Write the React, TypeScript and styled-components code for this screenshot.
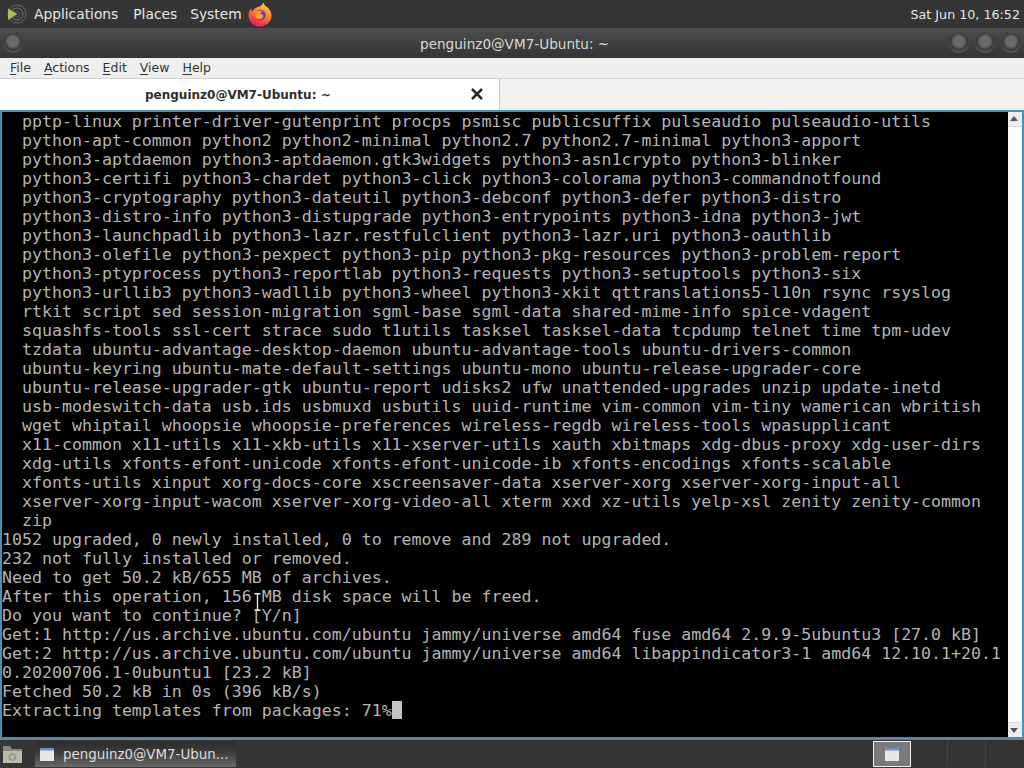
import React from "react";
import styled, { createGlobalStyle } from "styled-components";

const Global = createGlobalStyle`
  html, body { margin: 0; padding: 0; width: 1024px; height: 768px; overflow: hidden; background: #333; }
  * { box-sizing: border-box; }
`;

const Screen = styled.div`
  width: 1024px;
  height: 768px;
  display: flex;
  flex-direction: column;
  font-family: "DejaVu Sans", sans-serif;
  position: relative;
  overflow: hidden;
`;

const TopPanel = styled.div`
  height: 28px;
  background: #353535;
  display: flex;
  align-items: center;
  padding: 0 4px 0 6px;
  color: #e6e6e6;
  font-size: 13.8px;
  flex: none;
`;

const PanelMenu = styled.span<{ $left: number }>`
  margin-left: ${(p) => p.$left}px;
  display: flex;
`;

const Clock = styled.span`
  margin-left: auto;
  font-size: 12.7px;
`;

const TitleBar = styled.div`
  height: 30px;
  flex: none;
  background: linear-gradient(#4e4e4e, #414141 45%, #343434);
  display: flex;
  align-items: center;
  justify-content: space-between;
  padding: 0 3px 0 3px;
  position: relative;
`;

const Title = styled.div`
  position: absolute;
  left: 420px;
  top: 8px;
  color: #d8d8d8;
  font-size: 13.6px;
  white-space: nowrap;
`;

const Orb = styled.span`
  display: block;
  width: 20px;
  height: 20px;
  border-radius: 50%;
  background: radial-gradient(circle at 50% 42%, #6a6a6a 0 32%, #333333 58% 76%, #4c4c4c 100%);
  box-shadow: inset 0 -2px 2px #5a5a5a;
`;

const Orbs = styled.div`
  display: flex;
  gap: 6px;
`;

const MenuBar = styled.div`
  height: 20px;
  flex: none;
  background: #eeeeee;
  display: flex;
  align-items: center;
  padding: 0 0 2px 10px;
  gap: 13px;
  font-size: 12.5px;
  color: #333;
`;

const Key = styled.span`
  text-decoration: underline;
  text-underline-offset: 2px;
`;

const TabBar = styled.div`
  height: 32px;
  flex: none;
  display: flex;
  background: #f2f1f0;
  border-top: 1px solid #d4d4d4;
`;

const Tab = styled.div`
  width: 500px;
  background: #ffffff;
  border-right: 1px solid #c8c8c8;
  position: relative;
  display: flex;
  align-items: center;
  font-size: 12px;
  font-weight: bold;
  color: #2e2e2e;
  padding-left: 145px;
  height: 31px;
`;

const TabClose = styled.svg`
  position: absolute;
  left: 470px;
  top: 8px;
`;

const TermFrame = styled.div`
  flex: 1;
  min-height: 0;
  border: 2px solid #4a8fb5;
  border-bottom: 3px solid #5a84a8;
  display: flex;
  background: #000;
`;

const Term = styled.pre`
  flex: 1;
  margin: 0;
  padding: 0;
  background: #000;
  color: #b4b4b4;
  font-family: "DejaVu Sans Mono", monospace;
  font-size: 16.6px;
  line-height: 19px;
  overflow: hidden;
  white-space: pre;
`;

const Block = styled.span`
  display: inline-block;
  width: 10px;
  height: 18px;
  background: #c4c4c4;
  vertical-align: top;
`;

const ScrollBar = styled.div`
  width: 14px;
  flex: none;
  background: #ececec;
  display: flex;
  flex-direction: column;
`;

const ScrollThumb = styled.div`
  width: 14px;
  flex: 1;
  background: #ffffff;
  margin: 14px 0;
  border-top: 1px solid #ddd;
  border-bottom: 1px solid #ddd;
`;

const ArrowUp = styled.div`
  position: absolute;
  top: 116px;
  right: 6px;
  border: 4px solid transparent;
  border-top: 0;
  border-bottom: 5px solid #555;
`;

const ArrowDown = styled.div`
  position: absolute;
  top: 728px;
  right: 6px;
  border: 4px solid transparent;
  border-bottom: 0;
  border-top: 5px solid #555;
`;

const BottomPanel = styled.div`
  height: 28px;
  flex: none;
  background: #353535;
  display: flex;
  align-items: center;
`;

const FolderSlot = styled.div`
  width: 35px;
  display: flex;
  align-items: center;
  padding-left: 2px;
`;

const TaskButton = styled.div`
  width: 201px;
  height: 26px;
  background: linear-gradient(#2c2c2c, #3a3a3a 40%, #686868 100%);
  display: flex;
  align-items: center;
  color: #dedede;
  font-size: 13.4px;
  padding-left: 5px;
  gap: 9px;
  white-space: nowrap;
`;

const Workspaces = styled.div`
  display: flex;
  margin-left: 637px;
`;

const Workspace = styled.div<{ $active?: boolean }>`
  width: 37.5px;
  height: 26px;
  display: flex;
  align-items: center;
  justify-content: center;
  background: ${(p) => (p.$active ? "#7a7a7a" : "transparent")};
  border: ${(p) => (p.$active ? "1px solid #f0f0f0" : "0")};
  border-right: ${(p) => (p.$active ? "1px solid #f0f0f0" : "1px solid #444")};
`;

const IBeam = styled.svg`
  position: absolute;
  left: 253px;
  top: 593px;
`;

const lines = [
  "  pptp-linux printer-driver-gutenprint procps psmisc publicsuffix pulseaudio pulseaudio-utils",
  "  python-apt-common python2 python2-minimal python2.7 python2.7-minimal python3-apport",
  "  python3-aptdaemon python3-aptdaemon.gtk3widgets python3-asn1crypto python3-blinker",
  "  python3-certifi python3-chardet python3-click python3-colorama python3-commandnotfound",
  "  python3-cryptography python3-dateutil python3-debconf python3-defer python3-distro",
  "  python3-distro-info python3-distupgrade python3-entrypoints python3-idna python3-jwt",
  "  python3-launchpadlib python3-lazr.restfulclient python3-lazr.uri python3-oauthlib",
  "  python3-olefile python3-pexpect python3-pip python3-pkg-resources python3-problem-report",
  "  python3-ptyprocess python3-reportlab python3-requests python3-setuptools python3-six",
  "  python3-urllib3 python3-wadllib python3-wheel python3-xkit qttranslations5-l10n rsync rsyslog",
  "  rtkit script sed session-migration sgml-base sgml-data shared-mime-info spice-vdagent",
  "  squashfs-tools ssl-cert strace sudo t1utils tasksel tasksel-data tcpdump telnet time tpm-udev",
  "  tzdata ubuntu-advantage-desktop-daemon ubuntu-advantage-tools ubuntu-drivers-common",
  "  ubuntu-keyring ubuntu-mate-default-settings ubuntu-mono ubuntu-release-upgrader-core",
  "  ubuntu-release-upgrader-gtk ubuntu-report udisks2 ufw unattended-upgrades unzip update-inetd",
  "  usb-modeswitch-data usb.ids usbmuxd usbutils uuid-runtime vim-common vim-tiny wamerican wbritish",
  "  wget whiptail whoopsie whoopsie-preferences wireless-regdb wireless-tools wpasupplicant",
  "  x11-common x11-utils x11-xkb-utils x11-xserver-utils xauth xbitmaps xdg-dbus-proxy xdg-user-dirs",
  "  xdg-utils xfonts-efont-unicode xfonts-efont-unicode-ib xfonts-encodings xfonts-scalable",
  "  xfonts-utils xinput xorg-docs-core xscreensaver-data xserver-xorg xserver-xorg-input-all",
  "  xserver-xorg-input-wacom xserver-xorg-video-all xterm xxd xz-utils yelp-xsl zenity zenity-common",
  "  zip",
  "1052 upgraded, 0 newly installed, 0 to remove and 289 not upgraded.",
  "232 not fully installed or removed.",
  "Need to get 50.2 kB/655 MB of archives.",
  "After this operation, 156 MB disk space will be freed.",
  "Do you want to continue? [Y/n]",
  "Get:1 http://us.archive.ubuntu.com/ubuntu jammy/universe amd64 fuse amd64 2.9.9-5ubuntu3 [27.0 kB]",
  "Get:2 http://us.archive.ubuntu.com/ubuntu jammy/universe amd64 libappindicator3-1 amd64 12.10.1+20.1",
  "0.20200706.1-0ubuntu1 [23.2 kB]",
  "Fetched 50.2 kB in 0s (396 kB/s)",
  "Extracting templates from packages: 71%",
];

const MintLogo = () => (
  <svg width="22" height="24" viewBox="0 0 22 24" fill="none">
    <circle cx="11" cy="12" r="9" stroke="#6a6c5e" strokeWidth="1" />
    <circle cx="11" cy="12" r="6" stroke="#77796a" strokeWidth="1" />
    <circle cx="11" cy="12" r="3" stroke="#55574c" strokeWidth="1" />
    <path d="M2 6.5 L11.5 12 L2 18 Z" fill="#a4c254" />
  </svg>
);

const Firefox = () => (
  <svg width="24" height="25" viewBox="0 0 24 25">
    <defs>
      <linearGradient id="ff" x1="0.7" y1="0" x2="0.3" y2="1">
        <stop offset="0" stopColor="#ffd43a" />
        <stop offset="0.4" stopColor="#ff8a25" />
        <stop offset="0.85" stopColor="#f5304f" />
        <stop offset="1" stopColor="#e8285a" />
      </linearGradient>
    </defs>
    <path d="M12 24.5C5.6 24.5 .5 19.6 .5 13.6 .5 11 1.4 8.6 3 6.8 3.3 8.2 3.9 9 4.8 9.4 5.6 6.8 8 5.4 10.6 4.8 12.8 4.4 14.6 2.6 15.6 .5 16 2.4 17 3.6 18.6 4.8 21.6 6.8 23.5 10 23.5 13.6 23.5 19.6 18.4 24.5 12 24.5Z" fill="url(#ff)" />
    <circle cx="12.5" cy="13" r="5.2" fill="#6f3ab8" />
    <path d="M7.2 10.5C9.5 8.5 13 8.2 15.5 9.5 13.5 9.6 12.5 10.5 12.4 11.6 14 12 15.6 13 15.2 14.8 14.4 17 11 17.8 8.8 16.4 6.8 15 6.4 12.4 7.2 10.5Z" fill="#ff9a2e" />
  </svg>
);

const FolderIcon = () => (
  <svg width="21" height="19" viewBox="0 0 21 19">
    <path d="M1 1h7l2 3h10v14H1z" fill="#85877a" />
    <path d="M1 6h19v12H1z" fill="#bcbda8" />
    <circle cx="10.5" cy="12" r="3" fill="none" stroke="#808173" strokeWidth="1.6" strokeDasharray="2 1" />
  </svg>
);

const WindowIcon = () => (
  <svg width="14" height="13" viewBox="0 0 14 13">
    <rect width="14" height="13" fill="#e4e7ec" />
    <rect width="14" height="2.5" fill="#6d92c0" />
  </svg>
);

export default function App() {
  return (
    <Screen>
      <Global />
      <TopPanel>
        <MintLogo />
        <PanelMenu $left={6}>Applications</PanelMenu>
        <PanelMenu $left={15}>Places</PanelMenu>
        <PanelMenu $left={13}>System</PanelMenu>
        <PanelMenu $left={6}>
          <Firefox />
        </PanelMenu>
        <Clock>Sat Jun 10, 16:52</Clock>
      </TopPanel>
      <TitleBar>
        <Orb />
        <Title>penguinz0@VM7-Ubuntu: ~</Title>
        <Orbs>
          <Orb />
          <Orb />
          <Orb />
        </Orbs>
      </TitleBar>
      <MenuBar>
        <span><Key>F</Key>ile</span>
        <span><Key>A</Key>ctions</span>
        <span><Key>E</Key>dit</span>
        <span><Key>V</Key>iew</span>
        <span><Key>H</Key>elp</span>
      </MenuBar>
      <TabBar>
        <Tab>
          penguinz0@VM7-Ubuntu: ~
          <TabClose width="14" height="14" viewBox="0 0 14 14">
            <path d="M2 2L12 12M12 2L2 12" stroke="#2a2a2a" strokeWidth="2.6" />
          </TabClose>
        </Tab>
      </TabBar>
      <TermFrame>
        <Term>
          {lines.join("\n")}
          <Block />
        </Term>
        <ScrollBar>
          <ScrollThumb />
        </ScrollBar>
        <ArrowUp />
        <ArrowDown />
      </TermFrame>
      <BottomPanel>
        <FolderSlot>
          <FolderIcon />
        </FolderSlot>
        <TaskButton>
          <WindowIcon />
          penguinz0@VM7-Ubun...
        </TaskButton>
        <Workspaces>
          <Workspace $active>
            <WindowIcon />
          </Workspace>
          <Workspace />
          <Workspace />
        </Workspaces>
      </BottomPanel>
      <IBeam width="9" height="18" viewBox="0 0 9 18">
        <path d="M1.5 .7h6M4.5 .7v16.6M1.5 17.3h6" stroke="#e8e8e8" strokeWidth="1.4" fill="none" />
      </IBeam>
    </Screen>
  );
}
